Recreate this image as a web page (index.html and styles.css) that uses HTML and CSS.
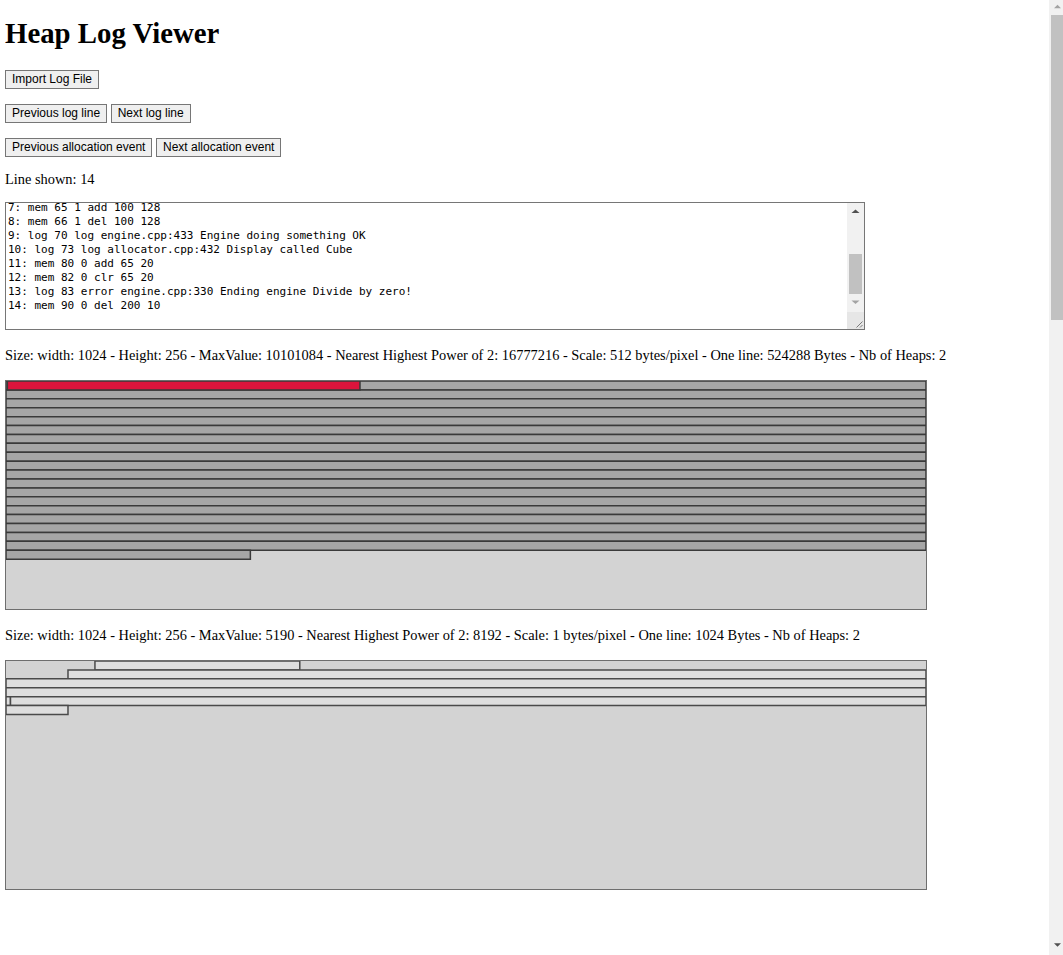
FILE: index.html
```html
<!DOCTYPE html>
<html lang="en">
<head>
<meta charset="utf-8">
<title>Heap Log Viewer</title>
<link rel="stylesheet" href="styles.css">
</head>
<body>
<h1 class="title">Heap Log Viewer</h1>
<div class="toolbar">
  <div class="controls">
    <button class="btn" type="button">Import Log File</button>
  </div>
  <div class="controls">
    <button class="btn" type="button">Previous log line</button>
    <button class="btn" type="button">Next log line</button>
  </div>
  <div class="controls">
    <button class="btn" type="button">Previous allocation event</button>
    <button class="btn" type="button">Next allocation event</button>
  </div>
</div>
<p class="status">Line shown: 14</p>
<div class="log-wrap">
<textarea class="log" id="log" readonly spellcheck="false">1: log 0 log main.cpp:12 Starting application
2: mem 10 0 add 0 64
3: mem 12 1 add 0 100
4: log 20 log engine.cpp:101 Engine init
5: mem 40 0 add 200 10
6: mem 60 0 add 64 1
7: mem 65 1 add 100 128
8: mem 66 1 del 100 128
9: log 70 log engine.cpp:433 Engine doing something OK
10: log 73 log allocator.cpp:432 Display called Cube
11: mem 80 0 add 65 20
12: mem 82 0 clr 65 20
13: log 83 error engine.cpp:330 Ending engine Divide by zero!
14: mem 90 0 del 200 10
</textarea>
  <div class="log-scrollbar" aria-hidden="true">
    <div class="sb-btn">
      <svg width="17" height="17" viewBox="0 0 17 17"><path d="M4.5 10h8L8.5 6.5z" fill="#505050"/></svg>
    </div>
    <div class="log-track"><div class="log-thumb"></div></div>
    <div class="sb-btn">
      <svg width="17" height="17" viewBox="0 0 17 17"><path d="M4.5 5.5h8L8.5 9z" fill="#a3a3a3"/></svg>
    </div>
  </div>
  <div class="log-corner" aria-hidden="true">
    <svg width="17" height="17" viewBox="0 0 17 17"><path d="M15.5 9.5l-6 6M15.5 13l-2.5 2.5" stroke="#7a7a7a" stroke-width="1"/></svg>
  </div>
</div>

<p class="heap-info">Size: width: 1024 - Height: 256 - MaxValue: 10101084 - Nearest Highest Power of 2: 16777216 - Scale: 512 bytes/pixel - One line: 524288 Bytes - Nb of Heaps: 2</p>
<div class="heap-canvas">
  <svg class="heap-svg" viewBox="0 0 1024 256" preserveAspectRatio="none">
    <g class="row-used">
      <rect x="0" y="0" width="1024" height="10"/>
      <rect x="0" y="10" width="1024" height="10"/>
      <rect x="0" y="20" width="1024" height="10"/>
      <rect x="0" y="30" width="1024" height="10"/>
      <rect x="0" y="40" width="1024" height="10"/>
      <rect x="0" y="50" width="1024" height="10"/>
      <rect x="0" y="60" width="1024" height="10"/>
      <rect x="0" y="70" width="1024" height="10"/>
      <rect x="0" y="80" width="1024" height="10"/>
      <rect x="0" y="90" width="1024" height="10"/>
      <rect x="0" y="100" width="1024" height="10"/>
      <rect x="0" y="110" width="1024" height="10"/>
      <rect x="0" y="120" width="1024" height="10"/>
      <rect x="0" y="130" width="1024" height="10"/>
      <rect x="0" y="140" width="1024" height="10"/>
      <rect x="0" y="150" width="1024" height="10"/>
      <rect x="0" y="160" width="1024" height="10"/>
      <rect x="0" y="170" width="1024" height="10"/>
      <rect x="0" y="180" width="1024" height="10"/>
      <rect x="0" y="190" width="272" height="10"/>
    </g>
    <rect class="block-selected" x="1.5" y="0" width="392.5" height="10"/>
  </svg>
</div>

<p class="heap-info">Size: width: 1024 - Height: 256 - MaxValue: 5190 - Nearest Highest Power of 2: 8192 - Scale: 1 bytes/pixel - One line: 1024 Bytes - Nb of Heaps: 2</p>
<div class="heap-canvas">
  <svg class="heap-svg" viewBox="0 0 1024 256" preserveAspectRatio="none">
    <g class="row-free">
      <rect x="99" y="0" width="228" height="10"/>
      <rect x="69" y="10" width="955" height="10"/>
      <rect x="0" y="20" width="1024" height="10"/>
      <rect x="0" y="30" width="1024" height="10"/>
      <rect x="0" y="40" width="5" height="10"/>
      <rect x="5" y="40" width="1019" height="10"/>
      <rect x="0" y="50" width="69" height="10"/>
    </g>
  </svg>
</div>

<div class="page-tail"></div>

<div class="page-scrollbar" aria-hidden="true">
  <div class="page-sb-up">
    <svg width="14" height="15" viewBox="0 0 14 15"><path d="M5 8.3h7L8.5 4.8z" fill="#a3a3a3"/></svg>
  </div>
  <div class="page-track"><div class="page-thumb"></div></div>
  <div class="page-sb-down">
    <svg width="14" height="17" viewBox="0 0 14 17"><path d="M5 5.2h7L8.5 8.7z" fill="#505050"/></svg>
  </div>
</div>
<script src="script.js"></script>
</body>
</html>
```

FILE: styles.css
```css
html {
  background: #ffffff;
}

body {
  margin: 0;
  padding: 0 0 0 5px;
  font-family: "Liberation Serif", "Times New Roman", serif;
  font-size: 14.4px;
  color: #000000;
}

.title {
  font-size: 28.8px;
  font-weight: bold;
  line-height: 33px;
  margin: 17px 0 20px;
}

.toolbar {
  display: flex;
  flex-direction: column;
  gap: 15px;
  margin-bottom: 14px;
}

.controls {
  display: flex;
  gap: 3.6px;
  height: 19px;
}

.btn {
  box-sizing: border-box;
  height: 19px;
  margin: 0;
  padding: 0 6px;
  font-family: "Liberation Sans", Arial, sans-serif;
  font-size: 12px;
  line-height: 17px;
  color: #000000;
  background: #efefef;
  border: 1px solid #767676;
  border-radius: 0;
}

.status {
  margin: 0 0 14px;
  line-height: 17px;
}

.log-wrap {
  position: relative;
  width: 860px;
  height: 128px;
}

.log {
  display: block;
  box-sizing: border-box;
  width: 860px;
  height: 128px;
  margin: 0;
  padding: 2px;
  border: 1px solid #767676;
  font-family: "DejaVu Sans Mono", monospace;
  font-size: 11px;
  line-height: 14px;
  color: #000000;
  background: #ffffff;
  resize: none;
  outline: none;
}

.log-scrollbar {
  position: absolute;
  top: 1px;
  right: 1px;
  width: 17px;
  height: 109px;
  display: flex;
  flex-direction: column;
  background: #f1f1f1;
}

.sb-btn {
  height: 17px;
  flex: none;
}

.sb-btn svg,
.log-corner svg,
.page-sb-up svg,
.page-sb-down svg {
  display: block;
}

.log-track {
  flex: 1;
  display: flex;
  flex-direction: column;
  justify-content: flex-end;
}

.log-thumb {
  height: 40px;
  margin: 0 2px 1px;
  background: #c1c1c1;
}

.log-corner {
  position: absolute;
  right: 1px;
  bottom: 1px;
  width: 17px;
  height: 17px;
  background: #e6e6e6;
}

.heap-info {
  margin: 17px 0 16px;
  line-height: 17px;
  white-space: nowrap;
}

.heap-canvas {
  width: 920px;
  height: 228px;
  border: 1px solid #6e6e6e;
  background: #d3d3d3;
}

.heap-svg {
  display: block;
  width: 100%;
  height: 100%;
}

.row-used rect {
  fill: #a6a6a6;
  stroke: #3a3a3a;
  stroke-width: 1.5;
  vector-effect: non-scaling-stroke;
}

.block-selected {
  fill: #dc143c;
  stroke: #3a3a3a;
  stroke-width: 1.5;
  vector-effect: non-scaling-stroke;
}

.row-free rect {
  fill: #dedede;
  stroke: #4a4a4a;
  stroke-width: 1.5;
  vector-effect: non-scaling-stroke;
}

.page-tail {
  height: 2006px;
}

.page-scrollbar {
  position: fixed;
  top: 0;
  right: 0;
  width: 14px;
  height: 100vh;
  display: flex;
  flex-direction: column;
  background: #f1f1f1;
}

.page-sb-up {
  height: 15px;
  flex: none;
}

.page-sb-down {
  height: 17px;
  flex: none;
}

.page-track {
  flex: 1;
}

.page-thumb {
  height: 305px;
  margin-left: 2px;
  background: #c1c1c1;
}
```

FILE: script.js
```js
document.addEventListener('DOMContentLoaded', function () {
  var log = document.getElementById('log');
  log.scrollTop = log.scrollHeight;
});
```
